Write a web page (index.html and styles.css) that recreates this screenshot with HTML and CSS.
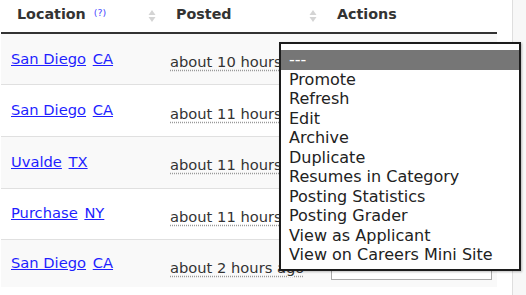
FILE: index.html
```html
<!DOCTYPE html>
<html>
<head>
<meta charset="utf-8">
<link rel="stylesheet" href="styles.css">
</head>
<body>
<div class="page">
  <div class="main">
    <table class="grid">
      <colgroup>
        <col class="c-loc"><col class="c-post"><col class="c-act">
      </colgroup>
      <thead>
        <tr>
          <th><div class="th-in"><span>Location <a class="help" href="#">(?)</a></span><svg class="sort" width="8" height="14" viewBox="0 0 8 14"><path d="M4 1 L7.5 6 L0.5 6 Z" fill="#d4d4d4"/><path d="M4 13 L7.5 8 L0.5 8 Z" fill="#d4d4d4"/></svg></div></th>
          <th><div class="th-in"><span>Posted</span><svg class="sort" width="8" height="14" viewBox="0 0 8 14"><path d="M4 1 L7.5 6 L0.5 6 Z" fill="#d4d4d4"/><path d="M4 13 L7.5 8 L0.5 8 Z" fill="#d4d4d4"/></svg></div></th>
          <th><div class="th-in"><span>Actions</span></div></th>
        </tr>
      </thead>
      <tbody>
        <tr>
          <td class="loc"><a href="#">San Diego</a> <a href="#">CA</a></td>
          <td class="post"><span class="ago">about 10 hours ago</span></td>
          <td class="act"><div class="sel">---</div></td>
        </tr>
        <tr>
          <td class="loc"><a href="#">San Diego</a> <a href="#">CA</a></td>
          <td class="post"><span class="ago">about 11 hours ago</span></td>
          <td class="act"><div class="sel">---</div></td>
        </tr>
        <tr>
          <td class="loc"><a href="#">Uvalde</a> <a href="#">TX</a></td>
          <td class="post"><span class="ago">about 11 hours ago</span></td>
          <td class="act"><div class="sel">---</div></td>
        </tr>
        <tr>
          <td class="loc"><a href="#">Purchase</a> <a href="#">NY</a></td>
          <td class="post"><span class="ago">about 11 hours ago</span></td>
          <td class="act"><div class="sel">---</div></td>
        </tr>
        <tr class="last">
          <td class="loc"><a href="#">San Diego</a> <a href="#">CA</a></td>
          <td class="post"><span class="ago">about 2 hours ago</span></td>
          <td class="act"><div class="sel">---</div></td>
        </tr>
      </tbody>
    </table>
  </div>
  <div class="side"></div>
</div>
<ul class="menu">
  <li class="on">---</li>
  <li>Promote</li>
  <li>Refresh</li>
  <li>Edit</li>
  <li>Archive</li>
  <li>Duplicate</li>
  <li>Resumes in Category</li>
  <li>Posting Statistics</li>
  <li>Posting Grader</li>
  <li>View as Applicant</li>
  <li>View on Careers Mini Site</li>
</ul>
</body>
</html>
```
FILE: styles.css
```css
html, body {
  margin: 0;
  padding: 0;
  background: #fff;
  font-family: "DejaVu Sans", Verdana, sans-serif;
  color: #333;
  overflow: hidden;
}
.page {
  display: flex;
  height: 295px;
}
.main {
  width: 497px;
  padding-left: 1px;
  box-sizing: border-box;
}
.side {
  margin-left: 15px;
  width: 14px;
  border-left: 1px solid #dedede;
  background: #f7f7f7;
}
.grid {
  width: 496px;
  border-collapse: collapse;
  table-layout: fixed;
}
.c-loc { width: 159px; }
.c-post { width: 161px; }
.c-act { width: 176px; }
.grid th {
  height: 33px;
  padding: 0 0 4px 16px;
  text-align: left;
  vertical-align: middle;
  font-size: 14.3px;
  font-weight: bold;
  color: #333;
  border-bottom: 2px solid #333;
  box-sizing: border-box;
}
.th-in {
  display: flex;
  align-items: center;
  justify-content: space-between;
  padding-right: 4px;
}
.help {
  font-size: 9.5px;
  font-weight: normal;
  color: #4a4aff;
  text-decoration: none;
  vertical-align: 3px;
  margin-left: 3px;
}
.sort { display: block; margin-top: 3px; }
.grid tbody tr { height: 51.7px; }
.grid tbody tr.last { height: 47px; }
.grid tbody tr:nth-child(odd) { background: #f9f9f9; }
.grid tbody tr + tr td { border-top: 1px solid #e0e0e0; }
.grid td {
  font-size: 14.7px;
  vertical-align: middle;
  padding: 0;
}
.loc { padding-left: 10px !important; padding-bottom: 2px !important; }
.loc a { color: #1f1fff; text-decoration: underline; }
.loc a + a { margin-left: 2px; }
.post { padding-left: 10px !important; padding-top: 5px !important; white-space: nowrap; overflow: hidden; }
.last .post { padding-top: 7px !important; }
.ago {
  color: #333;
  text-decoration: underline dotted #999;
  text-underline-offset: 3px;
}
.act { padding-left: 10px !important; padding-top: 9px !important; }
.sel {
  width: 161px;
  height: 24px;
  box-sizing: border-box;
  border: 1px solid #a9a9a9;
  background: #fff;
  font-size: 13px;
  line-height: 22px;
  padding-left: 4px;
  color: #222;
}
.menu {
  position: absolute;
  left: 279px;
  top: 42px;
  width: 242px;
  height: 229px;
  margin: 0;
  padding: 6px 0 0;
  box-sizing: border-box;
  list-style: none;
  background: #fff;
  border: 2px solid #1c1c1c;
  box-shadow: 1px 1px 2px rgba(0,0,0,0.25);
}
.menu li {
  height: 19.5px;
  line-height: 19.5px;
  padding-left: 8px;
  font-size: 16px;
  color: #222;
  white-space: nowrap;
}
.menu li.on {
  background: #767676;
  color: #fff;
}
```
